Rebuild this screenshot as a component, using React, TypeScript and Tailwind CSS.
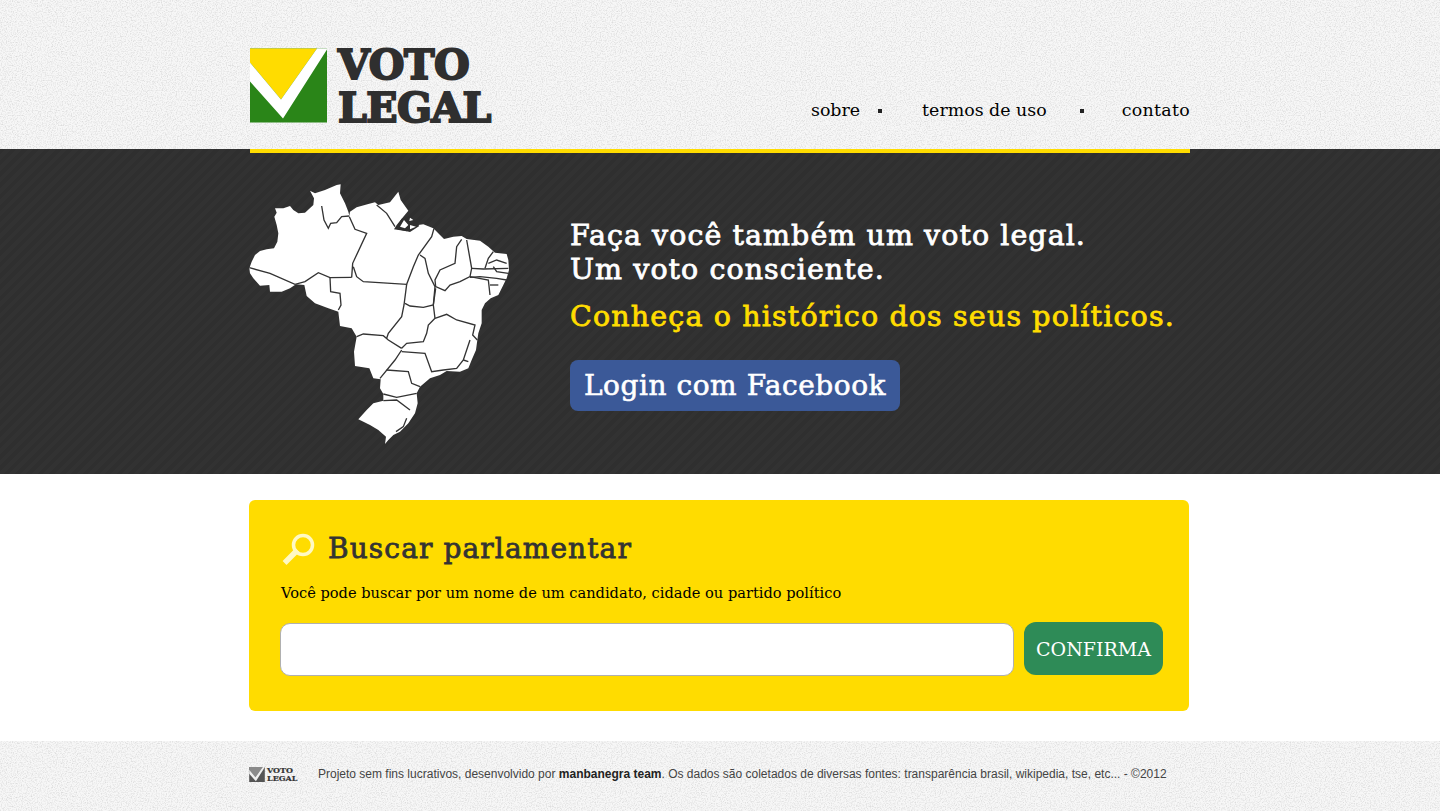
const slab = "font-['DejaVu_Serif',serif]";

const Noise = ({ id }: { id: string }) => (
  <svg aria-hidden="true" className="pointer-events-none absolute inset-0 h-full w-full">
    <filter id={id}>
      <feTurbulence type="fractalNoise" baseFrequency="0.8" numOctaves="2" stitchTiles="stitch" />
      <feColorMatrix values="0 0 0 0 0.5  0 0 0 0 0.5  0 0 0 0 0.5  1.1 0 0 0 -0.47" />
    </filter>
    <rect width="100%" height="100%" filter={`url(#${id})`} />
  </svg>
);

const LogoMark = ({ gray, className }: { gray?: boolean; className: string }) => (
  <svg viewBox="0 0 77 74" className={className} aria-hidden="true">
    <rect width="77" height="74" fill={gray ? "#555" : "#2a8518"} />
    <polygon points="0,0 67,0 31,51 0,14" fill={gray ? "#8a8a8a" : "#ffdc00"} />
    <polygon points="0,14 31,51 67,0 77,0 77,1 33,70 0,33" fill={gray ? "#eee" : "#fff"} />
  </svg>
);

const outline =
  "M28 295 L35 275 L45 255 L60 243 L80 238 L102 235 L112 215 L115 190 L110 165 L103 140 L110 128 L105 115 L130 115 L150 108 L160 120 L175 130 L195 128 L220 105 L222 85 L210 62 L225 70 L255 60 L290 45 L302 43 L300 70 L315 100 L325 125 L328 137 L330 125 L350 112 L385 102 L405 97 L415 105 L450 97 L475 65 L482 90 L505 122 L490 140 L470 165 L462 178 L500 184 L535 165 L550 163 L580 175 L600 195 L612 207 L640 200 L665 198 L680 207 L720 212 L745 230 L765 248 L800 252 L805 270 L807 300 L800 325 L790 345 L775 375 L752 385 L735 400 L725 420 L725 460 L715 490 L712 510 L708 540 L695 570 L685 595 L660 605 L620 603 L600 615 L570 625 L540 650 L530 670 L533 700 L525 730 L505 760 L480 785 L460 795 L445 810 L435 822 L438 800 L415 780 L390 765 L355 748 L380 720 L400 700 L430 692 L430 672 L420 655 L422 628 L400 625 L388 595 L345 588 L342 545 L350 500 L335 475 L300 468 L295 425 L265 415 L225 400 L200 378 L193 345 L168 343 L150 355 L125 365 L90 365 L88 345 L60 347 L40 325 L30 310 Z";

const borders = [
  "M28 293 L90 310 L165 343 L195 335 L235 308 L270 323 L335 322",
  "M335 322 L338 280 L380 190 L345 178 L328 140",
  "M245 108 L252 150 L265 175 L272 160 L290 158 L305 140 L328 138",
  "M410 105 L440 130 L465 170",
  "M340 290 L350 320 L370 335 L500 343 L520 290 L535 255 L575 200 L582 175",
  "M270 323 L272 365 L300 370 L303 405 L295 420",
  "M500 343 L492 405 L485 440 L445 490 L440 505",
  "M350 500 L370 492 L430 497 L445 510 L485 535",
  "M540 255 L555 265 L565 310 L585 350 L580 405 L550 412 L510 408 L495 400",
  "M665 208 L650 230 L645 280 L600 300 L585 330 L587 350 L615 362 L630 345 L660 335 L690 320 L695 295 L680 210",
  "M587 355 L580 405 L585 445",
  "M690 320 L745 330 L750 375",
  "M695 295 L730 297 L805 295",
  "M735 295 L745 265 L760 245",
  "M745 280 L770 270 L800 280",
  "M760 290 L770 305 L805 310",
  "M690 322 L720 320 L770 325 L800 330",
  "M750 345 L775 345",
  "M585 445 L620 433 L650 450 L705 465 L698 495 L712 510",
  "M585 445 L565 465 L560 490 L550 515 L500 520 L485 535",
  "M485 545 L555 550 L575 605 L610 600 L650 595 L670 570 L690 510",
  "M670 570 L685 575",
  "M485 540 L465 570 L420 625",
  "M440 600 L505 605 L515 640 L540 650",
  "M430 672 L470 682 L530 670",
  "M430 692 L470 690 L510 720",
  "M468 785 L490 770 L500 745",
];

const BrazilMap = () => (
  <svg viewBox="0 0 840 855" className="ml-[-10px] h-[285px] w-[280px] shrink-0" aria-hidden="true">
    <path d={outline} fill="#fff" />
    <path d="M466 176 L485 146 L510 138 L522 150 L538 168 L510 186 Z" fill="#2f2f2f" />
    <path d="M480 170 L492 150 L505 165 L495 175 Z M510 143 L520 150 L508 153 Z M510 165 L528 170 L510 178 Z" fill="#fff" />
    {borders.map((d) => (
      <path key={d} d={d} fill="none" stroke="#333" strokeWidth="4" />
    ))}
  </svg>
);

const NavLink = ({ children, className }: { children: string; className?: string }) => (
  <a className={`text-[17.4px] leading-[17px] text-black ${className ?? ""}`}>{children}</a>
);

const NavDot = () => <span className="block h-[4px] w-[4px] bg-[#222]" />;

export default function App() {
  return (
    <div className={`min-h-[811px] bg-white ${slab}`}>
      <header className="relative h-[149px] bg-[#f7f7f7]">
        <Noise id="noise-top" />
        <div className="relative mx-auto flex w-[940px] items-end justify-between pt-[48px]">
          <div className="flex gap-[11px]">
            <LogoMark className="h-[75px] w-[77px]" />
            <div className="mt-[-4px] text-[41px] leading-[43px] font-bold text-[#2f2f2f] [-webkit-text-stroke:2px_#2f2f2f]">
              <div className="tracking-[-0.4px]">VOTO</div>
              <div className="tracking-[-0.6px]">LEGAL</div>
            </div>
          </div>
          <nav className="flex items-center pb-[11px]">
            <NavLink>sobre</NavLink>
            <span className="ml-[18px] mr-[40px]"><NavDot /></span>
            <NavLink>termos de uso</NavLink>
            <span className="ml-[33px] mr-[38px]"><NavDot /></span>
            <NavLink className="tracking-[0.3px]">contato</NavLink>
          </nav>
        </div>
      </header>

      <section className="h-[325px] bg-[repeating-linear-gradient(135deg,#2f2f2f_0px,#2f2f2f_4px,#323232_4px,#323232_8px)]">
        <div className="mx-auto w-[940px]">
          <div className="h-[4px] bg-[#ffdc00]" />
          <div className="flex pt-[17px]">
            <BrazilMap />
            <div className="ml-[50px] pt-[49px]">
              <h1 className="text-[28.5px] leading-[34px] tracking-[1.05px] text-white [-webkit-text-stroke:0.8px_#fff]">
                Faça você também um voto legal.
                <br />
                Um voto consciente.
              </h1>
              <p className="mt-[12px] text-[28.5px] leading-[35px] tracking-[1.15px] text-[#ffdc00] [-webkit-text-stroke:0.8px_#ffdc00]">
                Conheça o histórico dos seus políticos.
              </p>
              <button className="mt-[26px] flex h-[51px] w-[330px] items-center justify-center rounded-lg bg-[#3b5998] text-[28px] tracking-[0.55px] text-white [-webkit-text-stroke:0.6px_#fff]">
                Login com Facebook
              </button>
            </div>
          </div>
        </div>
      </section>

      <main className="h-[267px] pt-[26px]">
        <div className="mx-auto h-[211px] w-[940px] -translate-x-px rounded-md bg-[#ffdc00] pl-[31px] pt-[31px] pr-[26px]">
          <div className="flex items-center gap-[11px]">
            <svg viewBox="0 0 36 36" className="ml-[1px] h-[36px] w-[36px]" aria-hidden="true">
              <circle cx="22" cy="14" r="9.5" fill="none" stroke="#fff9c4" strokeWidth="3.5" />
              <path d="M14.5 21 L5.5 30" stroke="#fff9c4" strokeWidth="5.5" strokeLinecap="square" />
            </svg>
            <h2 className="text-[28px] leading-[36px] tracking-[1.12px] text-[#333] [-webkit-text-stroke:0.8px_#333]">Buscar parlamentar</h2>
          </div>
          <p className="ml-[1px] mt-[16px] text-[14.6px] leading-[20px] text-black">
            Você pode buscar por um nome de um candidato, cidade ou partido político
          </p>
          <form className="mt-[20px] flex items-start">
            <input className="h-[53px] w-[734px] rounded-[10px] border border-[#b0b0b0] bg-white" />
            <button
              type="button"
              className="ml-[10px] mt-[-1px] h-[53px] w-[139px] rounded-xl bg-[#2e8b57] pt-[1px] text-[19px] text-white"
            >
              CONFIRMA
            </button>
          </form>
        </div>
      </main>

      <footer className="relative h-[70px] bg-[#f7f7f7]">
        <Noise id="noise-bottom" />
        <div className="relative mx-auto flex w-[942px] items-center pt-[24px] font-['Liberation_Sans',sans-serif] text-[12px] text-[#444]">
          <div className="flex w-[69px] items-center gap-[2px]">
            <LogoMark gray className="h-[15px] w-[16px]" />
            <div className={`text-[8px] leading-[8px] font-bold text-[#333] [-webkit-text-stroke:0.2px_#333] ${slab}`}>
              VOTO
              <br />
              LEGAL
            </div>
          </div>
          <p className="whitespace-nowrap">
            Projeto sem fins lucrativos, desenvolvido por <b className="text-[#222]">manbanegra team</b>. Os dados são coletados de diversas fontes: transparência brasil, wikipedia, tse, etc... - ©2012
          </p>
        </div>
      </footer>
    </div>
  );
}
